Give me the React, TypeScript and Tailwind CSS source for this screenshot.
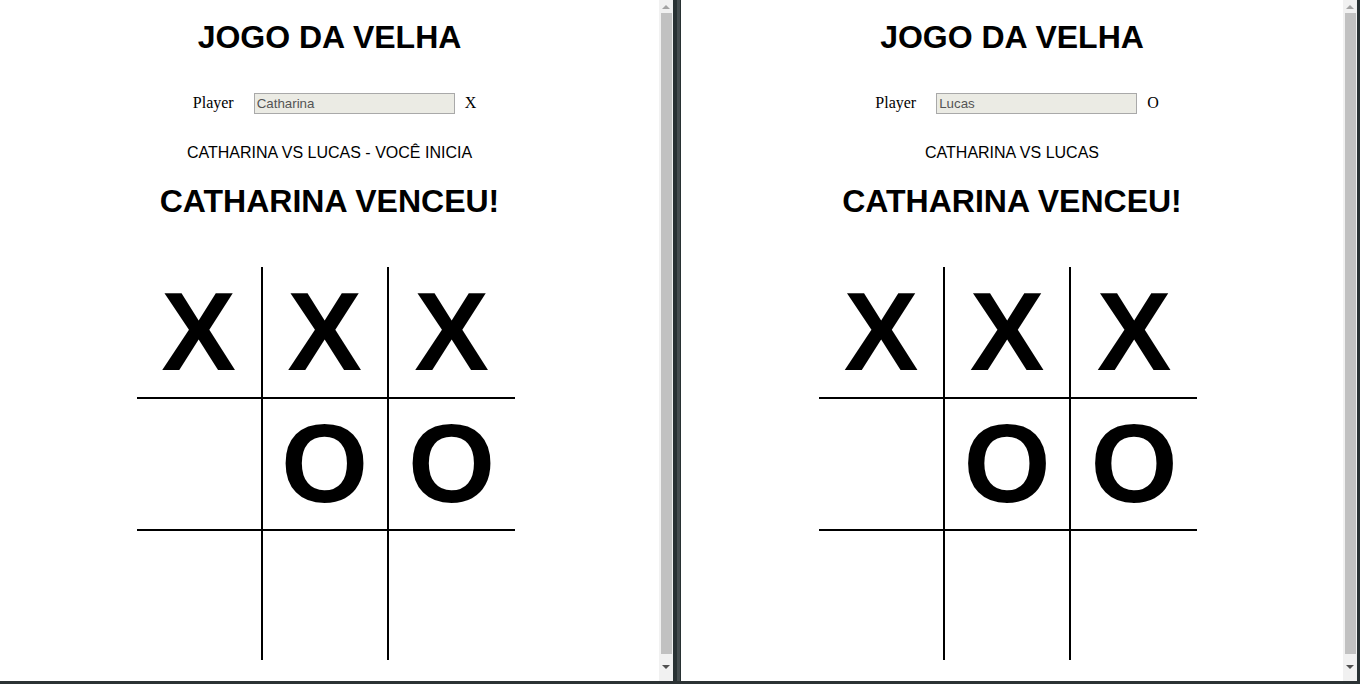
import React from "react";

type Cell = "X" | "O" | "";

const board: Cell[] = ["X", "X", "X", "", "O", "O", "", "", ""];

function Scrollbar() {
  return (
    <div className="w-[14px] h-full bg-[#f1f1f1] flex flex-col items-center shrink-0">
      <div className="h-[13px] w-full flex items-center justify-center">
        <div className="w-0 h-0 border-l-[4px] border-r-[4px] border-b-[4px] border-l-transparent border-r-transparent border-b-[#a3a3a3]" />
      </div>
      <div className="h-[641px] w-[11px] ml-[1px] bg-[#c1c1c1]" />
      <div className="flex-1" />
      <div className="h-[14px] w-full flex items-start justify-center pt-[4px] mb-[6px]">
        <div className="w-0 h-0 border-l-[4px] border-r-[4px] border-t-[4px] border-l-transparent border-r-transparent border-t-[#505050]" />
      </div>
    </div>
  );
}

function Window({
  name,
  mark,
  status,
}: {
  name: string;
  mark: string;
  status: string;
}) {
  return (
    <div className="flex-1 h-full bg-white flex flex-col items-center overflow-hidden">
      <h1 className="mt-[19px] text-[32px] leading-[37px] font-bold text-black font-['Liberation_Sans',Arial,sans-serif]">
        JOGO DA VELHA
      </h1>
      <div className="mt-[36px] flex items-center h-[22px] pl-[10px] font-['Liberation_Serif','Times_New_Roman',serif] text-[16px] text-black">
        <span>Player</span>
        <input
          disabled
          value={name}
          readOnly
          className="ml-[20px] w-[201px] h-[21px] border border-[#a9a9a9] bg-[#ebebe4] px-[2px] text-[13.33px] text-[#545454] font-['Liberation_Sans',Arial,sans-serif] outline-none"
        />
        <span className="ml-[10px]">{mark}</span>
      </div>
      <div className="mt-[30px] text-[16px] leading-[18px] text-black font-['Liberation_Sans',Arial,sans-serif]">
        {status}
      </div>
      <h1 className="mt-[21px] text-[32px] leading-[37px] font-bold text-black font-['Liberation_Sans',Arial,sans-serif]">
        CATHARINA VENCEU!
      </h1>
      <div className="mt-[47px] pr-[8px]">
        <div className="grid grid-cols-[126px_126px_126px] grid-rows-[132px_132px_129px]">
          {board.map((c, i) => {
            const col = i % 3;
            const row = Math.floor(i / 3);
            return (
              <div
                key={i}
                className={
                  "flex items-center justify-center box-border text-[112px] leading-[112px] font-bold text-black font-['Liberation_Sans',Arial,sans-serif] " +
                  (col < 2 ? "border-r-2 border-r-black " : "") +
                  (row < 2 ? "border-b-2 border-b-black" : "")
                }
              >
                {c}
              </div>
            );
          })}
        </div>
      </div>
    </div>
  );
}

export default function App() {
  return (
    <div className="w-[1360px] h-[684px] bg-[#2b3234] flex flex-col overflow-hidden">
      <div className="h-[681px] flex">
        <div className="w-[673px] h-full flex">
          <Window name="Catharina" mark="X" status="CATHARINA VS LUCAS - VOCÊ INICIA" />
          <Scrollbar />
        </div>
        <div className="w-[8px] h-full flex">
          <div className="w-[4px] bg-[#283133]" />
          <div className="w-[3px] bg-[#454d4f]" />
          <div className="w-[1px] bg-[#283133]" />
        </div>
        <div className="w-[676px] h-full flex">
          <Window name="Lucas" mark="O" status="CATHARINA VS LUCAS" />
          <Scrollbar />
        </div>
        <div className="flex-1 bg-[#283133]" />
      </div>
    </div>
  );
}
